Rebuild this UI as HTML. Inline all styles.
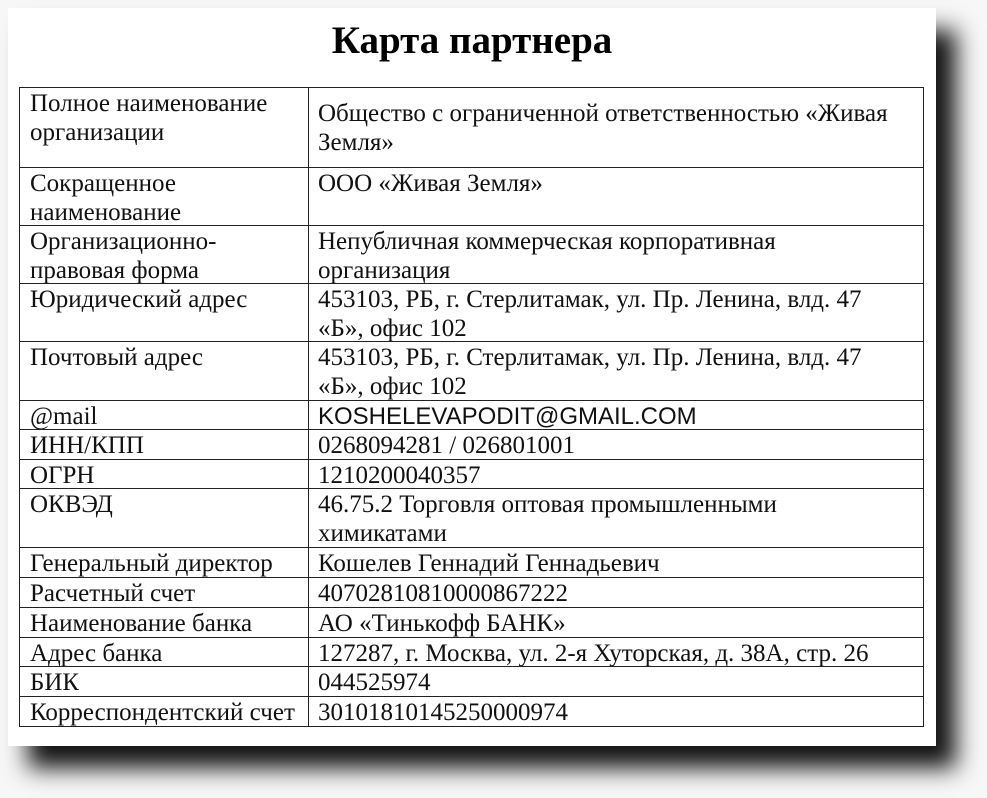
<!DOCTYPE html>
<html><head><meta charset="utf-8"><style>
html,body{margin:0;padding:0;width:987px;height:798px;background:#f7f7f7;overflow:hidden}
.page{position:absolute;left:8px;top:8px;width:928px;height:738px;background:#fff;box-shadow:20px 22px 22px rgba(0,0,0,0.92)}
h1{position:absolute;left:0;top:18px;width:944px;margin:0;text-align:center;font:bold 39px "Liberation Serif",serif;color:#000}
.r{position:absolute;left:19px;width:905px;border:1px solid #222;box-sizing:border-box;font:25px/29px "Liberation Serif",serif;color:#111}
.r div{position:absolute;top:1px}
.a{left:10px;width:275px}
.b{left:298px;width:592px}
.r:before{content:"";position:absolute;left:288px;top:-1px;bottom:-1px;border-left:1px solid #222}
.m{font-family:"Liberation Sans",sans-serif;font-size:24px}
</style></head><body>
<div class="page"></div>
<h1>Карта партнера</h1>
<div class="r" style="top:87px;height:81px"><div class="a">Полное наименование организации</div><div class="b" style="top:11px">Общество с ограниченной ответственностью «Живая Земля»</div></div>
<div class="r" style="top:167px;height:59px"><div class="a">Сокращенное наименование</div><div class="b">ООО «Живая Земля»</div></div>
<div class="r" style="top:225px;height:59px"><div class="a">Организационно-правовая форма</div><div class="b">Непубличная коммерческая корпоративная организация</div></div>
<div class="r" style="top:283px;height:59px"><div class="a">Юридический адрес</div><div class="b">453103, РБ, г. Стерлитамак, ул. Пр. Ленина, влд. 47 «Б», офис 102</div></div>
<div class="r" style="top:341px;height:60px"><div class="a">Почтовый адрес</div><div class="b">453103, РБ, г. Стерлитамак, ул. Пр. Ленина, влд. 47 «Б», офис 102</div></div>
<div class="r" style="top:400px;height:30px"><div class="a">@mail</div><div class="b m">KOSHELEVAPODIT@GMAIL.COM</div></div>
<div class="r" style="top:429px;height:31px"><div class="a">ИНН/КПП</div><div class="b">0268094281 / 026801001</div></div>
<div class="r" style="top:459px;height:30px"><div class="a">ОГРН</div><div class="b">1210200040357</div></div>
<div class="r" style="top:488px;height:60px"><div class="a">ОКВЭД</div><div class="b">46.75.2 Торговля оптовая промышленными химикатами</div></div>
<div class="r" style="top:547px;height:31px"><div class="a">Генеральный директор</div><div class="b">Кошелев Геннадий Геннадьевич</div></div>
<div class="r" style="top:577px;height:31px"><div class="a">Расчетный счет</div><div class="b">40702810810000867222</div></div>
<div class="r" style="top:607px;height:31px"><div class="a">Наименование банка</div><div class="b">АО «Тинькофф БАНК»</div></div>
<div class="r" style="top:637px;height:30px"><div class="a">Адрес банка</div><div class="b">127287, г. Москва, ул. 2-я Хуторская, д. 38А, стр. 26</div></div>
<div class="r" style="top:666px;height:31px"><div class="a">БИК</div><div class="b">044525974</div></div>
<div class="r" style="top:696px;height:31px"><div class="a">Корреспондентский счет</div><div class="b">30101810145250000974</div></div>
</body></html>
